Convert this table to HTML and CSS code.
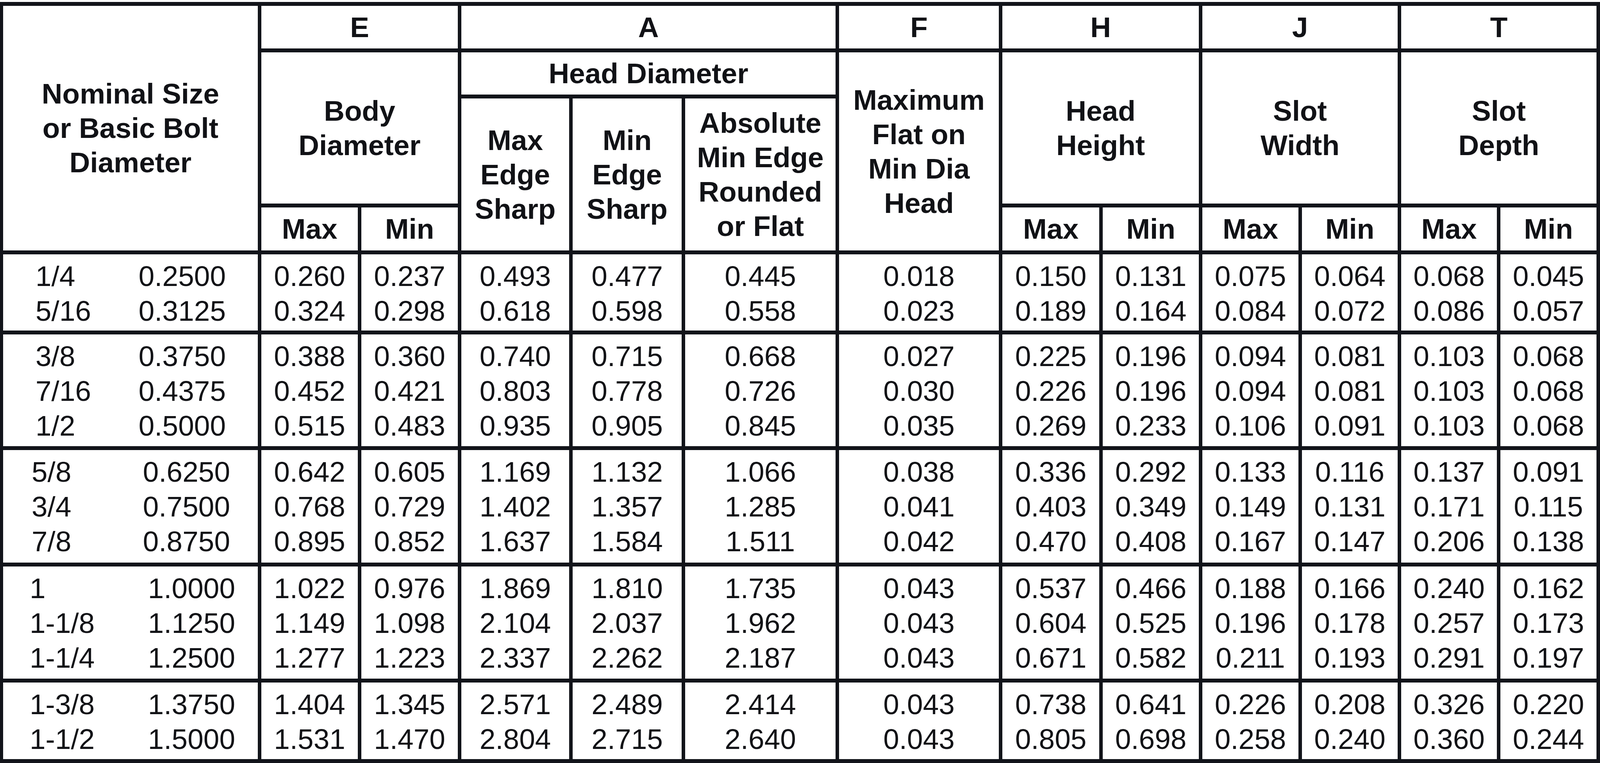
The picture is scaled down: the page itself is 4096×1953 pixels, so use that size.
FILE: index.html
```html
<!DOCTYPE html>
<html lang="en">
<head>
<meta charset="utf-8">
<title>Slotted Head Bolt Dimensions</title>
<link rel="stylesheet" href="styles.css">
</head>
<body>
<div class="sheet">
  <div class="hd nominal">Nominal Size<br>or Basic Bolt<br>Diameter</div>
  <div class="hd span2">E</div>
  <div class="hd span3">A</div>
  <div class="hd">F</div>
  <div class="hd span2">H</div>
  <div class="hd span2">J</div>
  <div class="hd span2">T</div>

  <div class="hd span2 rows2">Body<br>Diameter</div>
  <div class="hd span3">Head Diameter</div>
  <div class="hd rows3">Maximum<br>Flat on<br>Min Dia<br>Head</div>
  <div class="hd span2 rows2">Head<br>Height</div>
  <div class="hd span2 rows2">Slot<br>Width</div>
  <div class="hd span2 rows2">Slot<br>Depth</div>

  <div class="hd rows2">Max<br>Edge<br>Sharp</div>
  <div class="hd rows2">Min<br>Edge<br>Sharp</div>
  <div class="hd rows2">Absolute<br>Min Edge<br>Rounded<br>or Flat</div>

  <div class="hd">Max</div>
  <div class="hd">Min</div>
  <div class="hd">Max</div>
  <div class="hd">Min</div>
  <div class="hd">Max</div>
  <div class="hd">Min</div>
  <div class="hd">Max</div>
  <div class="hd">Min</div>

  <!-- group 1 -->
  <div class="size g12"><span>1/4</span><span>0.2500</span><span>5/16</span><span>0.3125</span></div>
  <div class="num">0.260<br>0.324</div>
  <div class="num">0.237<br>0.298</div>
  <div class="num">0.493<br>0.618</div>
  <div class="num">0.477<br>0.598</div>
  <div class="num">0.445<br>0.558</div>
  <div class="num">0.018<br>0.023</div>
  <div class="num">0.150<br>0.189</div>
  <div class="num">0.131<br>0.164</div>
  <div class="num">0.075<br>0.084</div>
  <div class="num">0.064<br>0.072</div>
  <div class="num">0.068<br>0.086</div>
  <div class="num">0.045<br>0.057</div>

  <!-- group 2 -->
  <div class="size g12"><span>3/8</span><span>0.3750</span><span>7/16</span><span>0.4375</span><span>1/2</span><span>0.5000</span></div>
  <div class="num">0.388<br>0.452<br>0.515</div>
  <div class="num">0.360<br>0.421<br>0.483</div>
  <div class="num">0.740<br>0.803<br>0.935</div>
  <div class="num">0.715<br>0.778<br>0.905</div>
  <div class="num">0.668<br>0.726<br>0.845</div>
  <div class="num">0.027<br>0.030<br>0.035</div>
  <div class="num">0.225<br>0.226<br>0.269</div>
  <div class="num">0.196<br>0.196<br>0.233</div>
  <div class="num">0.094<br>0.094<br>0.106</div>
  <div class="num">0.081<br>0.081<br>0.091</div>
  <div class="num">0.103<br>0.103<br>0.103</div>
  <div class="num">0.068<br>0.068<br>0.068</div>

  <!-- group 3 -->
  <div class="size g3"><span>5/8</span><span>0.6250</span><span>3/4</span><span>0.7500</span><span>7/8</span><span>0.8750</span></div>
  <div class="num">0.642<br>0.768<br>0.895</div>
  <div class="num">0.605<br>0.729<br>0.852</div>
  <div class="num">1.169<br>1.402<br>1.637</div>
  <div class="num">1.132<br>1.357<br>1.584</div>
  <div class="num">1.066<br>1.285<br>1.511</div>
  <div class="num">0.038<br>0.041<br>0.042</div>
  <div class="num">0.336<br>0.403<br>0.470</div>
  <div class="num">0.292<br>0.349<br>0.408</div>
  <div class="num">0.133<br>0.149<br>0.167</div>
  <div class="num">0.116<br>0.131<br>0.147</div>
  <div class="num">0.137<br>0.171<br>0.206</div>
  <div class="num">0.091<br>0.115<br>0.138</div>

  <!-- group 4 -->
  <div class="size g45"><span>1</span><span>1.0000</span><span>1-1/8</span><span>1.1250</span><span>1-1/4</span><span>1.2500</span></div>
  <div class="num">1.022<br>1.149<br>1.277</div>
  <div class="num">0.976<br>1.098<br>1.223</div>
  <div class="num">1.869<br>2.104<br>2.337</div>
  <div class="num">1.810<br>2.037<br>2.262</div>
  <div class="num">1.735<br>1.962<br>2.187</div>
  <div class="num">0.043<br>0.043<br>0.043</div>
  <div class="num">0.537<br>0.604<br>0.671</div>
  <div class="num">0.466<br>0.525<br>0.582</div>
  <div class="num">0.188<br>0.196<br>0.211</div>
  <div class="num">0.166<br>0.178<br>0.193</div>
  <div class="num">0.240<br>0.257<br>0.291</div>
  <div class="num">0.162<br>0.173<br>0.197</div>

  <!-- group 5 -->
  <div class="size g45"><span>1-3/8</span><span>1.3750</span><span>1-1/2</span><span>1.5000</span></div>
  <div class="num">1.404<br>1.531</div>
  <div class="num">1.345<br>1.470</div>
  <div class="num">2.571<br>2.804</div>
  <div class="num">2.489<br>2.715</div>
  <div class="num">2.414<br>2.640</div>
  <div class="num">0.043<br>0.043</div>
  <div class="num">0.738<br>0.805</div>
  <div class="num">0.641<br>0.698</div>
  <div class="num">0.226<br>0.258</div>
  <div class="num">0.208<br>0.240</div>
  <div class="num">0.326<br>0.360</div>
  <div class="num">0.220<br>0.244</div>
</div>
</body>
</html>
```

FILE: styles.css
```css
html, body {
  margin: 0;
  padding: 0;
  background: #ffffff;
}

.sheet {
  box-sizing: border-box;
  width: 4096px;
  margin-top: 5px;
  display: grid;
  grid-template-columns: 652px 247px 247px 276px 279px 385px 409px 248px 246px 246px 245px 245px 246px;
  grid-template-rows: 109px 108px 269px 110px 195px 286px 288px 287px 196px;
  column-gap: 9px;
  row-gap: 10px;
  padding: 10px 9px 10px 8px;
  background: #12141a;
  font-family: "Liberation Sans", Arial, Helvetica, sans-serif;
  color: #111216;
}

.hd {
  background: #ffffff;
  display: flex;
  align-items: center;
  justify-content: center;
  text-align: center;
  font-weight: 700;
  font-size: 73px;
  line-height: 88px;
}

.nominal {
  grid-row: span 4;
}

.span2 {
  grid-column: span 2;
}

.span3 {
  grid-column: span 3;
}

.rows2 {
  grid-row: span 2;
}

.rows3 {
  grid-row: span 3;
}

.num {
  background: #ffffff;
  box-sizing: border-box;
  padding-top: 11px;
  text-align: center;
  font-size: 73px;
  line-height: 89px;
  font-weight: 400;
}

.size {
  background: #ffffff;
  box-sizing: border-box;
  display: grid;
  grid-template-columns: auto auto;
  justify-content: space-between;
  align-content: start;
  padding-top: 11px;
  font-size: 73px;
  line-height: 89px;
  font-weight: 400;
}

.size.g12 {
  padding-left: 83px;
  padding-right: 82px;
}

.size.g3 {
  padding-left: 73px;
  padding-right: 71px;
}

.size.g45 {
  padding-left: 68px;
  padding-right: 58px;
}
```
